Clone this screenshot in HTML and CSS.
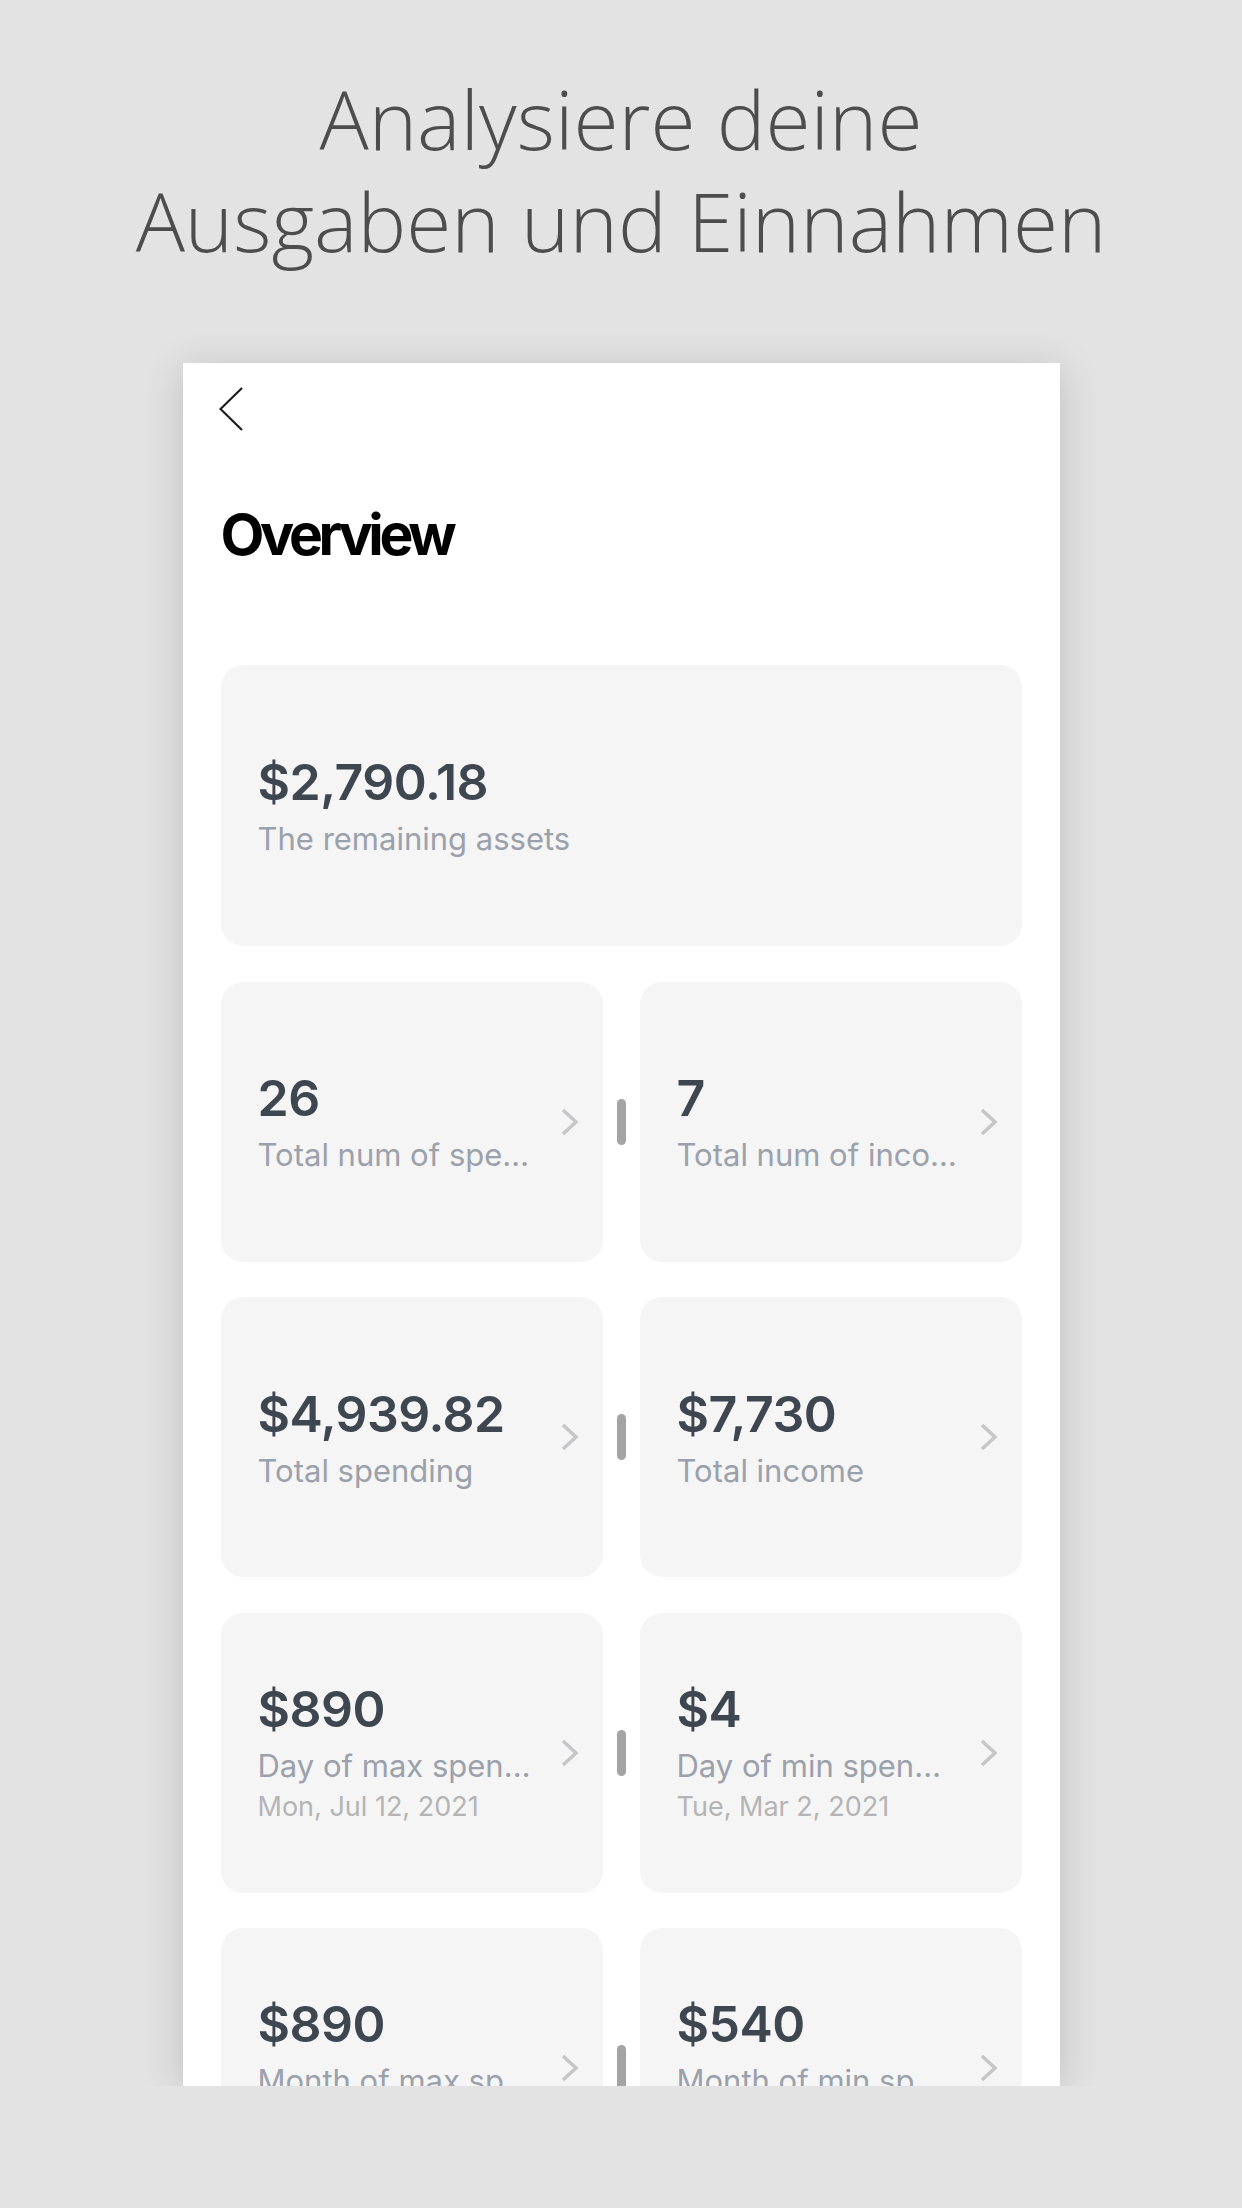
FILE: index.html
```html
<!DOCTYPE html>
<html lang="de">
<head>
  <meta charset="UTF-8">
  <title>Overview</title>
  <link rel="stylesheet" href="styles.css">
</head>
<body>

  <h1 class="promo-title">Analysiere deine<br>Ausgaben und Einnahmen</h1>

  <div class="phone">
    <div class="screen">
      <svg class="back" viewBox="0 0 24 44"><path d="M23 1 L1.5 22 L23 43"/></svg>
      <h2 class="page-title">Overview</h2>

      <div class="cards">
        <div class="card card-wide">
          <div class="card-text">
            <div class="value">$2,790.18</div>
            <div class="label">The remaining assets</div>
          </div>
        </div>

        <div class="row">
          <div class="card">
            <div class="card-text">
              <div class="value">26</div>
              <div class="label">Total num of spe…</div>
            </div>
            <svg class="chevron" viewBox="0 0 19 28"><path d="M3 2 L16 14 L3 26"/></svg>
          </div>
          <div class="handle"></div>
          <div class="card">
            <div class="card-text">
              <div class="value">7</div>
              <div class="label">Total num of inco…</div>
            </div>
            <svg class="chevron" viewBox="0 0 19 28"><path d="M3 2 L16 14 L3 26"/></svg>
          </div>
        </div>

        <div class="row">
          <div class="card">
            <div class="card-text">
              <div class="value">$4,939.82</div>
              <div class="label">Total spending</div>
            </div>
            <svg class="chevron" viewBox="0 0 19 28"><path d="M3 2 L16 14 L3 26"/></svg>
          </div>
          <div class="handle"></div>
          <div class="card">
            <div class="card-text">
              <div class="value">$7,730</div>
              <div class="label">Total income</div>
            </div>
            <svg class="chevron" viewBox="0 0 19 28"><path d="M3 2 L16 14 L3 26"/></svg>
          </div>
        </div>

        <div class="row">
          <div class="card">
            <div class="card-text">
              <div class="value">$890</div>
              <div class="label">Day of max spen…</div>
              <div class="date">Mon, Jul 12, 2021</div>
            </div>
            <svg class="chevron" viewBox="0 0 19 28"><path d="M3 2 L16 14 L3 26"/></svg>
          </div>
          <div class="handle"></div>
          <div class="card">
            <div class="card-text">
              <div class="value">$4</div>
              <div class="label">Day of min spen…</div>
              <div class="date">Tue, Mar 2, 2021</div>
            </div>
            <svg class="chevron" viewBox="0 0 19 28"><path d="M3 2 L16 14 L3 26"/></svg>
          </div>
        </div>

        <div class="row">
          <div class="card">
            <div class="card-text">
              <div class="value">$890</div>
              <div class="label">Month of max sp…</div>
              <div class="date">Jul 2021</div>
            </div>
            <svg class="chevron" viewBox="0 0 19 28"><path d="M3 2 L16 14 L3 26"/></svg>
          </div>
          <div class="handle"></div>
          <div class="card">
            <div class="card-text">
              <div class="value">$540</div>
              <div class="label">Month of min sp…</div>
              <div class="date">Mar 2021</div>
            </div>
            <svg class="chevron" viewBox="0 0 19 28"><path d="M3 2 L16 14 L3 26"/></svg>
          </div>
        </div>
      </div>
    </div>
  </div>

</body>
</html>
```

FILE: styles.css
```css
body {
  margin: 0;
  background: #e3e3e3;
  font-family: Inter, "Noto Sans", sans-serif;
}
.promo-title {
  margin: 0;
  padding-top: 67px;
  font-family: "Open Sans", sans-serif;
  font-weight: 300;
  font-size: 82px;
  line-height: 102px;
  text-align: center;
  color: #4d4d4d;
}
.phone {
  width: 877px;
  height: 1723px;
  margin: 92px auto 0;
  background: #ffffff;
  box-shadow: 0 6px 40px rgba(0,0,0,0.16);
  overflow: hidden;
}
.screen {
  padding: 24px 38px 0;
}
.back {
  display: block;
  width: 24px;
  height: 44px;
  margin-left: -2px;
  fill: none;
  stroke: #1c1c1e;
  stroke-width: 2.2;
}
.page-title {
  margin: 75px 0 0;
  font-size: 57px;
  line-height: 58px;
  font-weight: 700;
  letter-spacing: -4.3px;
  color: #000000;
}
.cards {
  display: flex;
  flex-direction: column;
  gap: 35.5px;
  margin-top: 101px;
}
.row {
  display: flex;
  align-items: center;
}
.card {
  flex: 1;
  min-width: 0;
  height: 280px;
  box-sizing: border-box;
  padding: 0 24px 0 37px;
  background: #f5f5f5;
  border-radius: 22px;
  display: flex;
  align-items: center;
}
.card-wide {
  flex: none;
  height: 281px;
}
.card-text {
  flex: 1;
  min-width: 0;
}
.value {
  font-size: 50px;
  line-height: 60px;
  font-weight: 600;
  color: #3e4650;
  letter-spacing: -0.5px;
}
.label {
  margin-top: 7px;
  font-size: 31px;
  line-height: 40px;
  color: #9ba1ab;
  white-space: nowrap;
  overflow: hidden;
  text-overflow: ellipsis;
}
.date {
  margin-top: 1px;
  font-size: 27px;
  line-height: 40px;
  color: #b4b4b4;
}
.chevron {
  flex: none;
  width: 19px;
  height: 28px;
  fill: none;
  stroke: #c6c6c8;
  stroke-width: 3.5;
}
.handle {
  flex: none;
  width: 9px;
  height: 46px;
  margin: 0 14px;
  border-radius: 5px;
  background: #a4a4a4;
}
```
